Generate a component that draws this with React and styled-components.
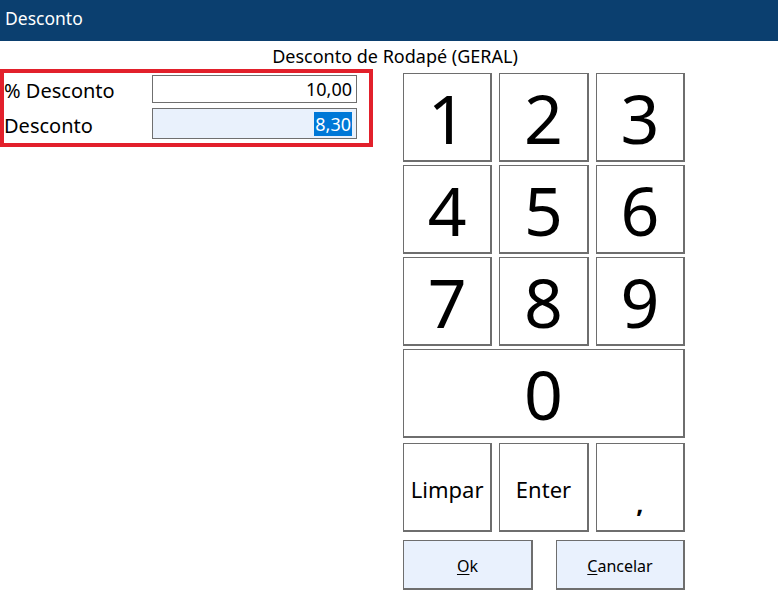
import styled, { createGlobalStyle } from "styled-components";

const Global = createGlobalStyle`
  html, body {
    margin: 0;
    padding: 0;
    background: #ffffff;
    font-family: "Noto Sans", "Open Sans", sans-serif;
    color: #000;
  }
`;

const Window = styled.div`
  width: 778px;
  height: 594px;
  background: #ffffff;
  overflow: hidden;
`;

const TitleBar = styled.div`
  height: 41px;
  background: #0b3f6f;
  color: #ffffff;
  font-size: 17.5px;
  line-height: 36px;
  padding-left: 5px;
  box-sizing: border-box;
`;

const Subtitle = styled.div`
  height: 28px;
  padding-top: 3px;
  box-sizing: border-box;
  text-align: center;
  font-size: 18px;
  line-height: 24px;
  padding-left: 12px;
`;

const Body = styled.div`
  display: flex;
  align-items: flex-start;
  gap: 30px;
`;

const FieldBox = styled.div`
  width: 373px;
  box-sizing: border-box;
  border: 4px solid #e2202b;
  padding: 1px 12px 4px 0;
  display: flex;
  flex-direction: column;
  gap: 5px;
`;

const FieldRow = styled.div`
  display: flex;
  align-items: center;
`;

const Label = styled.div`
  width: 148px;
  font-size: 20px;
  line-height: 24px;
  padding-top: 5px;
`;

const Field = styled.div`
  flex: 1;
  height: ${(p) => p.$h}px;
  box-sizing: border-box;
  border: 1px solid #6f6f6f;
  background: ${(p) => (p.$active ? "#e9f1fc" : "#ffffff")};
  display: flex;
  align-items: center;
  justify-content: flex-end;
  padding-right: 4px;
  font-size: 18px;
`;

const Selected = styled.span`
  background: #0078d7;
  color: #ffffff;
  line-height: 24px;
  padding: 0 1px;
`;

const Keypad = styled.div`
  margin-top: 4px;
  width: 282px;
  display: flex;
  flex-direction: column;
`;

const Grid = styled.div`
  display: grid;
  grid-template-columns: repeat(3, 1fr);
  grid-template-rows: repeat(4, 89px) 91px;
  column-gap: 7px;
  row-gap: 3px;
`;

const Key = styled.div`
  grid-column: ${(p) => (p.$wide ? "1 / span 3" : "auto")};
  margin-top: ${(p) => (p.$gapTop ? "2px" : "0")};
  box-sizing: border-box;
  border-style: solid;
  border-color: #6e6e6e;
  border-width: 1px 2px 2px 1px;
  background: #ffffff;
  display: flex;
  align-items: center;
  justify-content: center;
  font-size: ${(p) => p.$size || 68}px;
  font-weight: ${(p) => (p.$bold ? 700 : 400)};
  line-height: 1;
  padding-top: ${(p) => p.$pad || 2}px;
`;

const Actions = styled.div`
  display: flex;
  justify-content: space-between;
  margin-top: 8px;
`;

const ActionButton = styled.div`
  width: ${(p) => p.$w}px;
  height: 50px;
  box-sizing: border-box;
  border-style: solid;
  border-color: #6e6e6e;
  border-width: 1px 2px 2px 1px;
  background: #e9f1fd;
  display: flex;
  align-items: center;
  justify-content: center;
  font-size: 16px;
  padding-top: 2px;

  u {
    text-decoration: underline;
    text-underline-offset: 2px;
  }
`;

export default function App() {
  const digits = ["1", "2", "3", "4", "5", "6", "7", "8", "9"];
  return (
    <Window>
      <Global />
      <TitleBar>Desconto</TitleBar>
      <Subtitle>Desconto de Rodapé (GERAL)</Subtitle>
      <Body>
        <FieldBox>
          <FieldRow>
            <Label>% Desconto</Label>
            <Field $h={28}>10,00</Field>
          </FieldRow>
          <FieldRow>
            <Label>Desconto</Label>
            <Field $h={31} $active>
              <Selected>8,30</Selected>
            </Field>
          </FieldRow>
        </FieldBox>
        <Keypad>
          <Grid>
            {digits.map((d) => (
              <Key key={d}>{d}</Key>
            ))}
            <Key $wide>0</Key>
            <Key $size={22} $gapTop $pad={3}>Limpar</Key>
            <Key $size={22} $gapTop $pad={3}>Enter</Key>
            <Key $size={25} $gapTop $bold $pad={32}>,</Key>
          </Grid>
          <Actions>
            <ActionButton $w={130}>
              <span><u>O</u>k</span>
            </ActionButton>
            <ActionButton $w={129}>
              <span><u>C</u>ancelar</span>
            </ActionButton>
          </Actions>
        </Keypad>
      </Body>
    </Window>
  );
}
